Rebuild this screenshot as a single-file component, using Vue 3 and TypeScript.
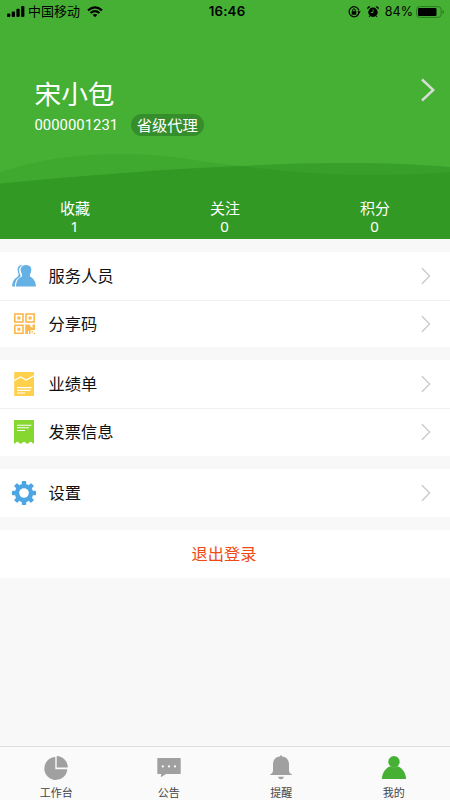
<script setup lang="ts">
interface Item { label: string; icon: string }
const stats: { label: string; value: number }[] = [
  { label: '收藏', value: 1 },
  { label: '关注', value: 0 },
  { label: '积分', value: 0 },
]
const groups: Item[][] = [
  [{ label: '服务人员', icon: 'people' }, { label: '分享码', icon: 'qr' }],
  [{ label: '业绩单', icon: 'sheet' }, { label: '发票信息', icon: 'invoice' }],
  [{ label: '设置', icon: 'gear' }],
]
const tabs: Item[] = [
  { label: '工作台', icon: 'pie' },
  { label: '公告', icon: 'chat' },
  { label: '提醒', icon: 'bell' },
  { label: '我的', icon: 'me' },
]
const teeth: number[] = [0, 45, 90, 135, 180, 225, 270, 315]
</script>

<template>
  <div class="screen">
    <header class="header">
      <svg class="waves" viewBox="0 0 450 239">
        <path d="M0 183.500C90 175 170 169 240 166C310 162 390 161.500 450 167V239H0Z" fill="#389f2b" />
        <path d="M0 172C40 159 80 154 122 154C170 154 200 162 240 166C290 172.500 330 175 368 175C400 175 430 174 450 172V239H0Z" fill="#107000" fill-opacity=".12" />
      </svg>
      <div class="status">
        <div class="carrier">
          <svg width="18" height="12" viewBox="0 0 18 12">
            <rect x="0" y="7.500" width="3.300" height="3.500" rx="1" /><rect x="4.700" y="5.500" width="3.300" height="5.500" rx="1" />
            <rect x="9.400" y="2.700" width="3.300" height="8.300" rx="1" /><rect x="14.100" y="0" width="3.300" height="11" rx="1" />
          </svg>
          <span>中国移动</span>
          <svg class="wifi" width="16" height="12" viewBox="0 0 16 12" fill="none" stroke="#000">
            <path d="M1 4.300Q8-1.700 15 4.300" stroke-width="2.200" /><path d="M3.500 7Q8 3.200 12.500 7" stroke-width="2" />
            <path d="M5.600 8.800Q8 7 10.400 8.800L8 11.300Z" fill="#000" stroke="none" />
          </svg>
        </div>
        <b class="time">16:46</b>
        <div class="power">
          <svg width="13" height="12" viewBox="0 0 13 12" fill="none" stroke="#000">
            <path d="M10.900 7A5 5 0 1 1 10.900 4.500" stroke-width="1.200" /><path d="M9.200 5.200H12.800L11 7.700Z" fill="#000" stroke="none" />
            <rect x="3.700" y="5.200" width="4.600" height="3.500" fill="#000" stroke="none" /><path d="M4.700 5.500V4.200A1.300 1.300 0 0 1 7.300 4.200V5.500" />
          </svg>
          <svg class="alarm" width="12" height="12" viewBox="0 0 12 12">
            <circle cx="6" cy="6.300" r="4.700" /><path d="M.5 3.300A2 2 0 0 1 3.500.8ZM11.500 3.300A2 2 0 0 0 8.500.8ZM2.500 9.500L1.500 11.300 3.500 10.500ZM9.500 9.500L10.500 11.300 8.500 10.500Z" />
            <path d="M6 3.500V6.500H3.800" fill="none" stroke="#46b035" stroke-width=".9" />
          </svg>
          <span class="percent">84%</span>
          <svg class="battery" width="29" height="12" viewBox="0 0 29 12">
            <rect x=".6" y=".6" width="24.500" height="10.800" rx="3" fill="none" stroke="#2a7a20" /><rect x="2" y="2" width="18.500" height="8" rx="1.200" />
            <path d="M26.500 4Q28 4.300 28 6Q28 7.700 26.500 8Z" fill="#2a7a20" />
          </svg>
        </div>
      </div>
      <div class="profile">
        <div>
          <div class="name">宋小包</div>
          <div class="meta"><span class="number">0000001231</span><span class="badge">省级代理</span></div>
        </div>
        <svg class="more" width="16" height="24" viewBox="0 0 16 24"><path d="M2 1.500L13.300 12 2 22.500" fill="none" stroke="#d6ddd4" stroke-width="2.400" /></svg>
      </div>
      <div class="stats">
        <div v-for="s in stats" :key="s.label" class="stat"><span>{{ s.label }}</span><span class="value">{{ s.value }}</span></div>
      </div>
    </header>

    <main class="menu">
      <section v-for="(group, i) in groups" :key="i" class="group">
        <div v-for="item in group" :key="item.label" class="row">
          <svg class="icon" width="24" height="26" viewBox="0 0 24 26">
            <g v-if="item.icon === 'people'" fill="#65b0e4">
              <path d="M9.500 2C5.500 2.500 5 6.500 6.200 9.500C7 11.500 6.800 13 5 14.300C1.500 16.500.3 19 .2 23.500H3C3 18.500 4.500 16 8 14C9 13 8.500 12 7.800 10.500C6.500 7 7 4 10.500 2Z" />
              <path d="M14 2C9.800 2 8.200 5 8.800 8C9.200 10.500 10.700 11.500 10 13.500C6 15 4.200 18.500 4 23.500H24C23.700 18.500 21.800 15.500 18 13.500C17.300 11.500 18.800 10.500 19.200 8C19.800 5 18.200 2 14 2Z" />
            </g>
            <g v-else-if="item.icon === 'qr'">
              <g fill="none" stroke="#f9b94c" stroke-width="1.600"><rect x="2.800" y="3" width="8.200" height="8" /><rect x="14" y="3" width="8.200" height="8" /><rect x="2.800" y="14.300" width="8.200" height="8" /></g>
              <path d="M5.400 5.500H8.400V8.500H5.400ZM16.600 5.500H19.600V8.500H16.600ZM5.400 16.800H8.400V19.800H5.400ZM13.200 13.500H18V15L20.500 17V13.500H23V19H18.500V23H17V20H16V23H13.200ZM19.500 20.200H21V21.500H19.500ZM21.500 21.700H23V23H21.500Z" fill="#f9b94c" />
            </g>
            <g v-else-if="item.icon === 'sheet'">
              <rect x="2.200" y="1" width="19.800" height="24" rx=".6" fill="#fed04b" />
              <path d="M2 9.500L8.500 6 14 9 22 4.800" fill="none" stroke="#fff" stroke-width="1.200" />
              <path d="M5 16.700H19.500M5 19.400H18.500M5 22H13" stroke="#fff" stroke-width="1.200" />
            </g>
            <g v-else-if="item.icon === 'invoice'">
              <path d="M2 1H22V24.800L20.300 24A1.700 1.700 0 0 0 17 24L15.300 24.800 13.600 24A1.700 1.700 0 0 0 10.400 24L8.700 24.800 7 24A1.700 1.700 0 0 0 3.700 24L2 24.800Z" fill="#86d72f" />
              <path d="M5 6.200H19.500M5 8.800H17M5 11.500H13" stroke="#fff" stroke-width="1.100" />
            </g>
            <g v-else fill="#4ca6e4">
              <rect v-for="a in teeth" :key="a" x="9.800" y="1" width="4.400" height="6" rx=".7" :transform="`rotate(${a} 12 13)`" />
              <circle cx="12" cy="13" r="7" fill="none" stroke="#4ca6e4" stroke-width="4.400" />
            </g>
          </svg>
          <span class="label">{{ item.label }}</span>
          <svg class="chevron" width="10" height="18" viewBox="0 0 10 18"><path d="M1 1.300L8.600 9 1 16.700" fill="none" stroke="#cbcbcb" stroke-width="1.400" /></svg>
        </div>
      </section>
      <button class="logout">退出登录</button>
    </main>

    <nav class="tabs">
      <div v-for="tab in tabs" :key="tab.label" class="tab">
        <svg width="26" height="26" viewBox="0 0 26 26" fill="#a0a0a0">
          <path v-if="tab.icon === 'pie'" d="M12.300 2V14.200H24.300A11.500 11.500 0 1 1 12.300 2ZM13.700 1A11.500 11.500 0 0 1 24.800 12.600H13.700Z" />
          <g v-else-if="tab.icon === 'chat'"><path d="M2 3H24Q24.700 3 24.700 3.700V18.300Q24.700 19 24 19H10L4.800 22.200 5.200 19H2Q1.300 19 1.300 18.300V3.700Q1.300 3 2 3Z" /><g fill="#fff"><circle cx="6.800" cy="11.400" r="1.100" /><circle cx="13" cy="11.400" r="1.100" /><circle cx="19" cy="11.400" r="1.100" /></g></g>
          <path v-else-if="tab.icon === 'bell'" d="M12 1.500Q12 .2 13 .2T14 1.500C19 2 21 5.500 21 9.500V15.500C21 17.500 21.800 18.500 24 19.400V20H2V19.400C4.200 18.500 5 17.500 5 15.500V9.500C5 5.500 7 2 12 1.500ZM10 21.700H16Q15.300 24.200 13 24.200T10 21.700Z" />
          <g v-else fill="#46b035"><circle cx="13" cy="6.700" r="5.700" /><path d="M.8 24C1.500 16 6 12.500 9.500 11.300Q13 13.200 16.500 11.300C20 12.500 24.500 16 25.200 24Z" /></g>
        </svg>
        <span>{{ tab.label }}</span>
      </div>
    </nav>
  </div>
</template>

<style>
body { margin: 0; }
</style>

<style scoped>
.screen { display: flex; flex-direction: column; width: 450px; height: 800px; overflow: hidden; background: #f8f8f8; font-family: "Liberation Sans", "Noto Sans CJK SC", sans-serif; }
.header { position: relative; display: flex; flex-direction: column; flex: none; height: 239px; background: #46b035; color: #fff; }
.waves { position: absolute; inset: 0; width: 450px; height: 239px; }
.status { position: relative; display: grid; grid-template-columns: 1fr auto 1fr; align-items: center; height: 23px; padding: 0 5px 0 7px; color: #000; font-size: 13px; line-height: 23px; }
.carrier, .power { display: flex; align-items: center; }
.carrier span { margin-left: 3px; }
.wifi { margin-left: 7px; }
.time { padding-left: 2px; font: 600 13.300px/23px Inter, sans-serif; letter-spacing: .2px; }
.power { justify-content: flex-end; }
.alarm { margin-left: 6px; }
.percent { margin: 0 3px 0 6px; font: 12.600px/23px Inter, sans-serif; }
.profile { position: relative; display: flex; justify-content: space-between; height: 175px; padding: 54px 14px 0 34.500px; box-sizing: border-box; }
.name { height: 36px; font-size: 26.700px; line-height: 36px; }
.meta { display: flex; align-items: center; gap: 12.500px; height: 22px; margin-top: 1px; }
.number { font: 14.900px/20px Roboto, sans-serif; }
.badge { height: 22px; padding: 0 6px; border-radius: 11px; background: #368d2b; font-size: 15.300px; line-height: 23px; }
.more { margin-top: 1px; }
.stats { position: relative; display: grid; grid-template-columns: repeat(3, 1fr); }
.stat { display: flex; flex-direction: column; align-items: center; font-size: 15px; line-height: 22px; }
.value { margin: -2px 1px 0 0; line-height: 16px; font-family: "Noto Sans", sans-serif; }
.menu { display: flex; flex-direction: column; gap: 13.300px; padding-top: 13px; }
.group { background: #fff; }
.row { display: flex; align-items: center; height: 47.600px; padding: 0 19.500px 0 12px; box-sizing: border-box; }
.row + .row { border-top: 1px solid #f0f0f0; }
.label { flex: 1; margin-left: 12.500px; color: #111; font-size: 16.300px; line-height: 24px; }
.logout { height: 48px; padding: 0 2px 0 0; border: 0; background: #fff; color: #f04a13; font: 16.300px/48px "Liberation Sans", "Noto Sans CJK SC", sans-serif; }
.tabs { display: grid; grid-template-columns: repeat(4, 1fr); height: 54px; margin-top: auto; border-top: 1px solid #dedede; background: #fafafa; box-sizing: border-box; }
.tab { display: flex; flex-direction: column; align-items: center; padding: 8px 0 0; color: #444; font-size: 11px; line-height: 16px; }
.tab span { margin-top: 4px; }
</style>
